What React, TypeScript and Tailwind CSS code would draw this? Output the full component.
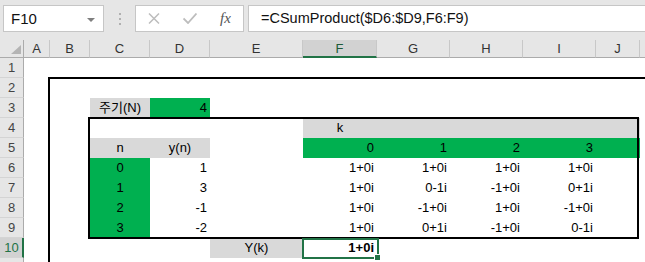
import React from "react"

const colStart = [
  "col-start-1", "col-start-2", "col-start-3", "col-start-4", "col-start-5", "col-start-6",
  "col-start-7", "col-start-8", "col-start-9", "col-start-10", "col-start-11", "col-start-12",
]
const rowStart = [
  "row-start-1", "row-start-2", "row-start-3", "row-start-4", "row-start-5", "row-start-6",
  "row-start-7", "row-start-8", "row-start-9", "row-start-10", "row-start-11", "row-start-12",
]

// K and row 11 are only partly in view, so they get no label
const letters = ["A", "B", "C", "D", "E", "F", "G", "H", "I", "J", ""]

type Cell = {
  c: number
  r: number
  t?: string
  bg?: "gray" | "green"
  a?: "c" | "r"
  bold?: boolean
}

// c: 1 = A, 3 = C ... r: sheet row
const cells: Cell[] = [
  { c: 3, r: 3, t: "주기(N)", bg: "gray", a: "c" },
  { c: 4, r: 3, t: "4", bg: "green", a: "r" },
  { c: 6, r: 4, t: "k", bg: "gray", a: "c" },
  { c: 7, r: 4, bg: "gray" },
  { c: 8, r: 4, bg: "gray" },
  { c: 9, r: 4, bg: "gray" },
  { c: 10, r: 4, bg: "gray" },
  { c: 3, r: 5, t: "n", bg: "gray", a: "c" },
  { c: 4, r: 5, t: "y(n)", bg: "gray", a: "c" },
  { c: 6, r: 5, t: "0", bg: "green", a: "r" },
  { c: 7, r: 5, t: "1", bg: "green", a: "r" },
  { c: 8, r: 5, t: "2", bg: "green", a: "r" },
  { c: 9, r: 5, t: "3", bg: "green", a: "r" },
  { c: 10, r: 5, bg: "green" },
  { c: 5, r: 10, t: "Y(k)", bg: "gray", a: "c" },
  { c: 6, r: 10, t: "1+0i", a: "r", bold: true },
]

const yn = ["1", "3", "-1", "-2"]
const table = [
  ["1+0i", "1+0i", "1+0i", "1+0i"],
  ["1+0i", "0-1i", "-1+0i", "0+1i"],
  ["1+0i", "-1+0i", "1+0i", "-1+0i"],
  ["1+0i", "0+1i", "-1+0i", "0-1i"],
]
table.forEach((row, i) => {
  cells.push({ c: 3, r: 6 + i, t: String(i), bg: "green", a: "c" })
  cells.push({ c: 4, r: 6 + i, t: yn[i], a: "r" })
  row.forEach((v, j) => cells.push({ c: 6 + j, r: 6 + i, t: v, a: "r" }))
})

export default function App() {
  return (
    <div className="h-[262px] w-[645px] overflow-hidden bg-white font-['Liberation_Sans','Noto_Sans_CJK_KR',sans-serif]">
      {/* formula bar */}
      <div className="flex h-[40px] items-start bg-[#e6e6e6] pt-[5px]">
        <div className="ml-[3px] flex h-[27px] w-[101px] items-center justify-between border border-[#c6c6c6] bg-white pl-[7px] pr-[8px] pt-[2px]">
          <span className="text-[15px] text-[#111]">F10</span>
          <svg width="8" height="4" viewBox="0 0 8 4">
            <path d="M0 0h8L4 4z" fill="#7f7f7f" />
          </svg>
        </div>
        <div className="ml-[15px] mt-[8px] flex flex-col gap-[3px]">
          <div className="h-[2px] w-[2px] bg-[#b0b0b0]" />
          <div className="h-[2px] w-[2px] bg-[#b0b0b0]" />
          <div className="h-[2px] w-[2px] bg-[#b0b0b0]" />
        </div>
        <div className="ml-[14px] flex h-[27px] w-[109px] items-center border border-[#c6c6c6] bg-white pl-[12px]">
          <svg width="12" height="11" viewBox="0 0 12 11">
            <path d="M1 0.5l10 10M11 0.5l-10 10" stroke="#bdbdbd" strokeWidth="1.5" />
          </svg>
          <svg className="ml-[23px]" width="14" height="11" viewBox="0 0 14 11">
            <path d="M0.5 5.5l4.5 4.5 8.5-9.5" stroke="#bdbdbd" strokeWidth="1.8" fill="none" />
          </svg>
          <span className="ml-[23px] font-['Liberation_Serif',serif] text-[15px] italic leading-none text-[#555]">
            fx
          </span>
        </div>
        <div className="ml-[4px] mr-[-10px] flex h-[27px] flex-1 items-center border border-[#c6c6c6] bg-white pl-[12px] pt-[1px]">
          <span className="text-[14.5px] text-[#111]">=CSumProduct($D6:$D9,F6:F9)</span>
        </div>
      </div>

      {/* sheet */}
      <div className="grid grid-cols-[24px_26px_40px_60px_60px_93px_74px_73px_73px_73px_44px_60px] grid-rows-[18px_repeat(11,20px)] text-[13px]">
        <div className="col-start-1 row-start-1 flex items-end justify-end border-b border-r border-[#ababab] bg-[#e6e6e6] pb-[3px] pr-[2px]">
          <svg width="10" height="9" viewBox="0 0 10 9">
            <path d="M10 0V9H0z" fill="#b4b4b4" />
          </svg>
        </div>
        {letters.map((l, i) => (
          <div
            key={i}
            className={`${colStart[i + 1]} row-start-1 flex items-center justify-center border-r ${
              l === "F"
                ? "border-b-2 border-r-[#c8c8c8] border-b-[#217346] bg-[#d2d2d2] pt-[2px] text-[#1e5a38]"
                : "border-b border-[#c8c8c8] border-b-[#ababab] bg-[#e6e6e6] text-[#333]"
            }`}
          >
            {l}
          </div>
        ))}
        {Array.from({ length: 11 }, (_, i) => i + 1).map((n) => (
          <div
            key={n}
            className={`col-start-1 ${rowStart[n]} flex items-center justify-center border-b border-b-[#d4d4d4] ${
              n === 10
                ? "border-r-2 border-r-[#217346] bg-[#d2d2d2] pl-[1px] text-[#217346]"
                : "border-r border-r-[#ababab] bg-[#e6e6e6] text-[#444]"
            }`}
          >
            {n < 11 ? n : ""}
          </div>
        ))}
        {cells.map((cell, i) => (
          <div
            key={i}
            className={`${colStart[cell.c]} ${rowStart[cell.r]} flex items-center text-black ${
              cell.a === "c" ? "justify-center" : "justify-end pr-[3px]"
            } ${cell.bg === "gray" ? "bg-[#d9d9d9]" : cell.bg === "green" ? "bg-[#00b050]" : ""} ${
              cell.bold ? "font-bold" : ""
            }`}
          >
            {cell.t}
          </div>
        ))}

        {/* outer border B2:K */}
        <div className="col-start-3 col-end-13 row-start-3 row-end-13 ml-[-2px] mt-[-1px] border-2 border-black" />
        {/* table border C4:J9 */}
        <div className="col-start-4 col-end-12 row-start-5 row-end-11 mb-[-1px] ml-[-2px] mr-[1px] mt-[-1px] border-2 border-black" />
        {/* active cell F10 */}
        <div className="relative col-start-7 row-start-11 mb-[-1px] ml-[-1px] mr-[-2px] border-2 border-[#217346]">
          <div className="absolute bottom-[-4px] right-[-4px] h-[7px] w-[7px] border border-white bg-[#217346]" />
        </div>
      </div>
    </div>
  )
}
